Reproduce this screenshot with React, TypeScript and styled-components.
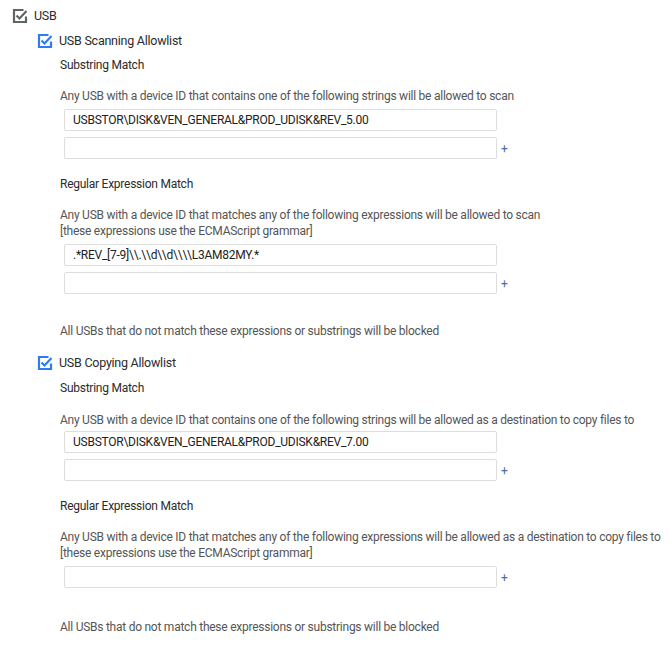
import React from "react";
import styled, { createGlobalStyle } from "styled-components";

const GlobalStyle = createGlobalStyle`
  html, body {
    margin: 0;
    padding: 0;
    background: #ffffff;
  }
  body {
    font-family: Roboto, "Liberation Sans", sans-serif;
    font-size: 12px;
    letter-spacing: -0.25px;
    color: #333333;
  }
`;

const Page = styled.div`
  padding: 3px 0 0 11px;
  width: 669px;
  box-sizing: border-box;
`;

const CheckRow = styled.label<{ indent?: number; top?: number }>`
  display: flex;
  align-items: center;
  gap: 5px;
  height: 25px;
  color: #2b2b2b;
  font-size: 12.5px;
  margin-left: ${(p) => p.indent || 0}px;
  margin-top: ${(p) => p.top || 0}px;
`;

const Section = styled.div`
  padding-left: 49px;
`;

const GroupTitle = styled.div<{ top: number }>`
  line-height: 16px;
  color: #2b2b2b;
  margin-top: ${(p) => p.top}px;
`;

const Description = styled.div<{ top: number }>`
  line-height: 16px;
  color: #555555;
  white-space: nowrap;
  margin-top: ${(p) => p.top}px;
`;

const InputList = styled.div<{ top: number }>`
  display: flex;
  flex-direction: column;
  gap: 6px;
  margin-top: ${(p) => p.top}px;
  padding-left: 4px;
`;

const InputRow = styled.div`
  display: flex;
  align-items: center;
`;

const TextBox = styled.div`
  width: 433px;
  height: 22px;
  box-sizing: border-box;
  border: 1px solid #dddddd;
  border-radius: 2px;
  padding: 0 8px;
  line-height: 20px;
  color: #222222;
  white-space: nowrap;
  overflow: hidden;
`;

const AddButton = styled.span`
  margin-left: 4px;
  color: #4a6fa5;
  font-size: 12px;
  line-height: 12px;
  margin-top: 2px;
`;

const Footnote = styled.div<{ top: number }>`
  line-height: 16px;
  color: #555555;
  white-space: nowrap;
  margin-top: ${(p) => p.top}px;
`;

function CheckIcon({ color }: { color: string }) {
  return (
    <svg width="18" height="18" viewBox="0 0 18 18" fill="none">
      <path
        d="M12.5 3 H3 V15 H15 V9.5"
        stroke={color}
        strokeWidth="2.2"
        strokeLinejoin="miter"
      />
      <path d="M5.5 8.5 L8.5 11.5 L15.5 4" stroke={color} strokeWidth="2.2" />
    </svg>
  );
}

function Inputs({ values, top }: { values: string[]; top: number }) {
  return (
    <InputList top={top}>
      {values.map((v, i) => (
        <InputRow key={i}>
          <TextBox>{v}</TextBox>
          {i === values.length - 1 && <AddButton>+</AddButton>}
        </InputRow>
      ))}
    </InputList>
  );
}

export default function App() {
  return (
    <Page>
      <GlobalStyle />
      <CheckRow>
        <CheckIcon color="#5f6466" />
        USB
      </CheckRow>
      <CheckRow indent={25}>
        <CheckIcon color="#2f7cf0" />
        USB Scanning Allowlist
      </CheckRow>
      <Section>
        <GroupTitle top={4}>Substring Match</GroupTitle>
        <Description top={15}>
          Any USB with a device ID that contains one of the following strings
          will be allowed to scan
        </Description>
        <Inputs
          top={5}
          values={["USBSTOR\\DISK&VEN_GENERAL&PROD_UDISK&REV_5.00", ""]}
        />
        <GroupTitle top={17}>Regular Expression Match</GroupTitle>
        <Description top={15}>
          Any USB with a device ID that matches any of the following expressions
          will be allowed to scan
          <br />
          [these expressions use the ECMAScript grammar]
        </Description>
        <Inputs
          top={5}
          values={[".*REV_[7-9]\\\\.\\\\d\\\\d\\\\\\\\L3AM82MY.*", ""]}
        />
        <Footnote top={29}>
          All USBs that do not match these expressions or substrings will be
          blocked
        </Footnote>
      </Section>
      <CheckRow indent={25} top={11}>
        <CheckIcon color="#2f7cf0" />
        USB Copying Allowlist
      </CheckRow>
      <Section>
        <GroupTitle top={5}>Substring Match</GroupTitle>
        <Description top={16}>
          Any USB with a device ID that contains one of the following strings
          will be allowed as a destination to copy files to
        </Description>
        <Inputs
          top={3}
          values={["USBSTOR\\DISK&VEN_GENERAL&PROD_UDISK&REV_7.00", ""]}
        />
        <GroupTitle top={17}>Regular Expression Match</GroupTitle>
        <Description top={15}>
          Any USB with a device ID that matches any of the following expressions
          will be allowed as a destination to copy files to
          <br />
          [these expressions use the ECMAScript grammar]
        </Description>
        <Inputs top={5} values={[""]} />
        <Footnote top={31}>
          All USBs that do not match these expressions or substrings will be
          blocked
        </Footnote>
      </Section>
    </Page>
  );
}
